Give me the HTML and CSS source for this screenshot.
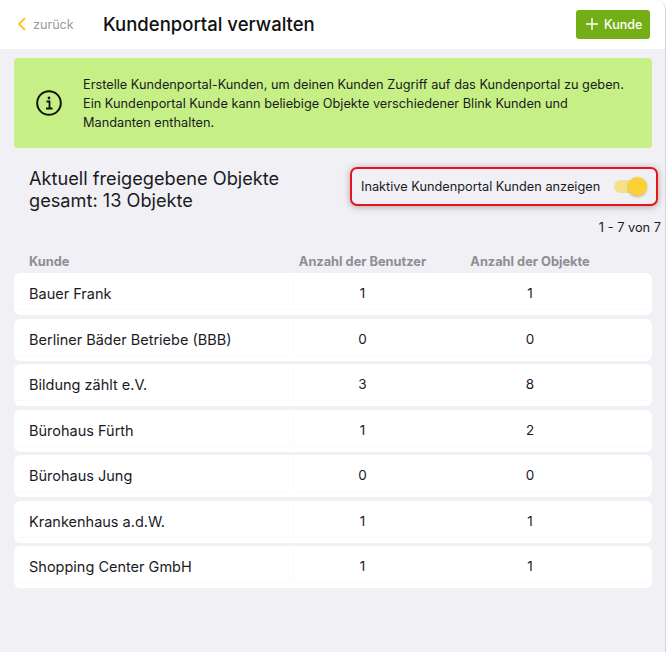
FILE: index.html
```html
<!DOCTYPE html>
<html lang="de">
<head>
  <meta charset="UTF-8" />
  <meta name="viewport" content="width=device-width, initial-scale=1.0" />
  <title>Kundenportal verwalten</title>
  <link rel="stylesheet" href="styles.css">
</head>
<body>

  <div class="page">
    <header class="top-bar">
      <a class="back-link">
        <svg class="back-icon" width="10" height="14" viewBox="0 0 10 14"><path d="M7.5 1.5 2 7l5.5 5.5" fill="none" stroke="#fdc830" stroke-width="2" stroke-linecap="round" stroke-linejoin="round"/></svg>
        <span>zurück</span>
      </a>
      <h1>Kundenportal verwalten</h1>
      <button class="add-btn">
        <svg width="12" height="12" viewBox="0 0 12 12"><path d="M6 0v12M0 6h12" fill="none" stroke="#fff" stroke-width="1.4"/></svg>
        <span>Kunde</span>
      </button>
    </header>

    <div class="info-box">
      <svg class="info-icon" width="26" height="26" viewBox="0 0 26 26">
        <circle cx="13" cy="13" r="11.8" fill="none" stroke="#111" stroke-width="2"/>
        <circle cx="13" cy="8" r="1.4" fill="#111"/>
        <path d="M10.5 11.5H13.5V18M10 18.5H16.5" fill="none" stroke="#111" stroke-width="1.8"/>
      </svg>
      <p>Erstelle Kundenportal-Kunden, um deinen Kunden Zugriff auf das Kundenportal zu geben.<br>Ein Kundenportal Kunde kann beliebige Objekte verschiedener Blink Kunden und<br>Mandanten enthalten.</p>
    </div>

    <section class="summary">
      <h2>Aktuell freigegebene Objekte<br>gesamt: 13 Objekte</h2>
      <div class="toggle-box">
        <span>Inaktive Kundenportal Kunden anzeigen</span>
        <span class="switch"><span class="knob"></span></span>
      </div>
    </section>

    <div class="paging">1 - 7 von 7</div>

    <div class="table-head">
      <span class="name">Kunde</span>
      <span class="num">Anzahl der Benutzer</span>
      <span class="num last">Anzahl der Objekte</span>
    </div>

    <ul class="rows">
      <li><span class="name">Bauer Frank</span><span class="num">1</span><span class="num last">1</span></li>
      <li><span class="name">Berliner Bäder Betriebe (BBB)</span><span class="num">0</span><span class="num last">0</span></li>
      <li><span class="name">Bildung zählt e.V.</span><span class="num">3</span><span class="num last">8</span></li>
      <li><span class="name">Bürohaus Fürth</span><span class="num">1</span><span class="num last">2</span></li>
      <li><span class="name">Bürohaus Jung</span><span class="num">0</span><span class="num last">0</span></li>
      <li><span class="name">Krankenhaus a.d.W.</span><span class="num">1</span><span class="num last">1</span></li>
      <li><span class="name">Shopping Center GmbH</span><span class="num">1</span><span class="num last">1</span></li>
    </ul>
  </div>

</body>
</html>
```

FILE: styles.css
```css
* {
  box-sizing: border-box;
  margin: 0;
  padding: 0;
}

body {
  font-family: Inter, 'Liberation Sans', sans-serif;
  background: white;
  color: #1b1b1f;
  height: 652px;
  overflow: hidden;
}

.page {
  width: 666px;
  height: 652px;
  background: #f0f0f5;
  border-right: 1px solid #d4d4d8;
  border-top-right-radius: 10px;
  overflow: hidden;
}

.top-bar {
  display: flex;
  align-items: center;
  height: 49px;
  padding: 0 15.5px 1px 17px;
  background: white;
}

.back-link {
  display: flex;
  align-items: center;
  gap: 6px;
  width: 86px;
  font-size: 12.6px;
  color: #9a9aa3;
}

.top-bar h1 {
  font-size: 18.5px;
  font-weight: 500;
  color: #111;
  flex: 1;
}

.add-btn {
  display: flex;
  align-items: center;
  gap: 6px;
  width: 73.5px;
  height: 29px;
  padding: 0 0 0 10px;
  border: none;
  border-radius: 3px;
  background: #74ae17;
  color: white;
  font: 500 12.5px Inter, sans-serif;
}

.info-box {
  display: flex;
  align-items: center;
  gap: 21px;
  height: 90px;
  margin: 9px 13px 0 14px;
  padding: 0 0 0 22px;
  background: #c6f086;
  border-radius: 4px;
  font-size: 12.75px;
  line-height: 19px;
  white-space: nowrap;
}

.info-icon {
  flex-shrink: 0;
}

.summary {
  display: flex;
  align-items: flex-start;
  justify-content: space-between;
  margin-top: 19px;
  padding: 0 7px 0 29px;
}

.summary h2 {
  font-size: 18.2px;
  font-weight: 400;
  line-height: 22px;
}

.toggle-box {
  display: flex;
  align-items: center;
  justify-content: space-between;
  width: 308px;
  height: 39px;
  padding: 0 12px 0 9px;
  border: 2px solid #e8141c;
  border-radius: 7px;
  font-size: 12.75px;
  white-space: nowrap;
  box-shadow: 0 1px 7px rgba(0, 0, 0, 0.3);
}

.switch {
  position: relative;
  width: 30px;
  height: 13px;
  border-radius: 7px;
  background: #f5e08c;
}

.knob {
  position: absolute;
  top: -3px;
  right: -3px;
  width: 19px;
  height: 19px;
  border-radius: 50%;
  background: #fdd033;
  box-shadow: 0 1px 3px rgba(0, 0, 0, 0.25);
}

.paging {
  margin-top: 9px;
  padding-right: 4px;
  text-align: right;
  font-size: 12.8px;
  line-height: 16px;
}

.table-head,
.rows li {
  display: grid;
  grid-template-columns: 280px 137px 221px;
}

.table-head {
  margin: 17px 13px 0 14px;
  height: 18px;
  line-height: 18px;
  font-size: 12.8px;
  font-weight: 700;
  color: #8e8e94;
}

.name {
  padding-left: 15px;
}

.num {
  text-align: center;
  white-space: nowrap;
}

.last {
  padding-right: 23px;
}

.rows {
  list-style: none;
  margin: 2px 13px 0 14px;
}

.rows li {
  height: 42px;
  margin-bottom: 3.5px;
  background: white;
  border-radius: 6px;
  font-size: 14.5px;
}

.rows li span {
  height: 37px;
  padding-top: 5px;
  line-height: 31px;
  border-bottom: 1px solid #fafafb;
}

.rows li .num {
  font-size: 13.5px;
}

.rows li .name {
  border-right: 1px solid #fafafb;
}
```
